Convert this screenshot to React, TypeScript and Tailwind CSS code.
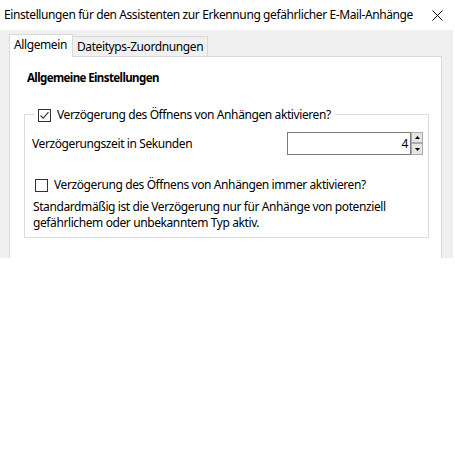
import { useState } from 'react';

function CheckBox({ checked, onToggle }: { checked: boolean; onToggle: () => void }) {
  return (
    <button
      type="button"
      onClick={onToggle}
      className="w-[13px] h-[13px] shrink-0 border border-[#333333] bg-white flex items-center justify-center"
    >
      {checked && (
        <svg width="11" height="11" viewBox="0 0 11 11" fill="none">
          <path d="M1.5 5.5 L4.2 8.2 L9.5 2.2" stroke="#333333" strokeWidth="1.1" />
        </svg>
      )}
    </button>
  );
}

function SpinBox({ value, setValue }: { value: number; setValue: (v: number) => void }) {
  return (
    <div className="flex">
      <div className="w-[124px] h-[23px] border border-[#7a7a7a] bg-white flex items-center justify-end pr-[2px]">
        {value}
      </div>
      <div className="flex flex-col w-[12px] h-[23px]">
        <button
          type="button"
          onClick={() => setValue(value + 1)}
          className="h-[11px] border border-[#acacac] bg-[#e5e5e5] flex items-center justify-center"
        >
          <svg width="5" height="3" viewBox="0 0 5 3">
            <path d="M0 3 L2.5 0 L5 3 Z" fill="#000" />
          </svg>
        </button>
        <button
          type="button"
          onClick={() => setValue(Math.max(0, value - 1))}
          className="h-[12px] border border-[#acacac] bg-[#e5e5e5] flex items-center justify-center"
        >
          <svg width="5" height="3" viewBox="0 0 5 3">
            <path d="M0 0 L5 0 L2.5 3 Z" fill="#000" />
          </svg>
        </button>
      </div>
    </div>
  );
}

export default function App() {
  const [delayOn, setDelayOn] = useState(true);
  const [alwaysOn, setAlwaysOn] = useState(false);
  const [seconds, setSeconds] = useState(4);
  const [tab, setTab] = useState(0);

  return (
    <div
      className="w-[455px] h-[472px] bg-white text-black text-[12px] leading-[16px] tracking-[-0.4px] whitespace-nowrap"
      style={{ fontFamily: '"Segoe UI", "Noto Sans", sans-serif' }}
    >
      {/* title bar */}
      <div className="h-[30px] flex items-center justify-between pl-[4px] pr-[12px]">
        <span>Einstellungen für den Assistenten zur Erkennung gefährlicher E-Mail-Anhänge</span>
        <svg width="11" height="11" viewBox="0 0 11 11" className="mt-[1px] shrink-0">
          <path d="M0.5 0.5 L10.5 10.5 M10.5 0.5 L0.5 10.5" stroke="#000" strokeWidth="1" />
        </svg>
      </div>

      {/* dialog body */}
      <div className="w-[453px] h-[228px] bg-[#f0f0f0] pl-[9px] pt-[4px] overflow-hidden">
        <div className="flex items-end h-[22px]">
          <button
            type="button"
            onClick={() => setTab(0)}
            className="relative z-10 w-[64px] h-[23px] -mb-px bg-white border border-b-0 border-[#d9d9d9] pl-[4px] pb-[2px] text-left"
          >
            Allgemein
          </button>
          <button
            type="button"
            onClick={() => setTab(1)}
            className="w-[135px] h-[20px] bg-[#f0f0f0] border border-l-0 border-b-0 border-[#d9d9d9] pl-[4px] text-left"
          >
            Dateityps-Zuordnungen
          </button>
        </div>

        <div className="w-[433px] h-[220px] bg-white border border-b-0 border-[#d9d9d9]">
          {tab === 0 && (
            <div className="flex flex-col">
              <div className="font-bold text-[11.5px] tracking-[-0.6px] pl-[17px] mt-[13px]">
                Allgemeine Einstellungen
              </div>

              <div className="ml-[14px] mt-[28px] w-[405px] border border-[#dcdcdc] flex flex-col pb-[6px]">
                <div className="-mt-[8px] ml-[9px] w-fit bg-white px-[4px] flex items-center gap-[6px]">
                  <CheckBox checked={delayOn} onToggle={() => setDelayOn(!delayOn)} />
                  <span>Verzögerung des Öffnens von Anhängen aktivieren?</span>
                </div>

                <div className="mt-[9px] pl-[7px] pr-[5px] flex items-center justify-between">
                  <span>Verzögerungszeit in Sekunden</span>
                  <SpinBox value={seconds} setValue={setSeconds} />
                </div>

                <div className="mt-[22px] pl-[10px] flex items-center gap-[6px]">
                  <CheckBox checked={alwaysOn} onToggle={() => setAlwaysOn(!alwaysOn)} />
                  <span>Verzögerung des Öffnens von Anhängen immer aktivieren?</span>
                </div>

                <p className="mt-[6px] pl-[8px]">
                  Standardmäßig ist die Verzögerung nur für Anhänge von potenziell
                  <br />
                  gefährlichem oder unbekanntem Typ aktiv.
                </p>
              </div>
            </div>
          )}
        </div>
      </div>
    </div>
  );
}
